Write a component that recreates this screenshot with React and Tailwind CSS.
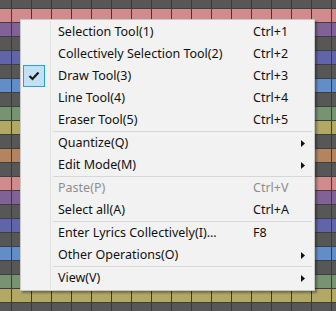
import React from "react";

const OCTAVE = [
    "bg-[#d08c8c]", "bg-[#806296]", "bg-[#575757]", "bg-[#6264aa]", "bg-[#575757]", "bg-[#628ec8]",
    "bg-[#575757]", "bg-[#769470]", "bg-[#b2a866]", "bg-[#575757]", "bg-[#b28460]", "bg-[#575757]",
];

const rowGrid =
    "bg-[linear-gradient(to_right,#3b3b3b_1px,transparent_1px)] bg-[length:20px_100%] bg-[position:11px_0]";

const MENU = [
    {label: "Selection Tool(1)", key: "Ctrl+1"},
    {label: "Collectively Selection Tool(2)", key: "Ctrl+2"},
    {label: "Draw Tool(3)", key: "Ctrl+3", checked: true},
    {label: "Line Tool(4)", key: "Ctrl+4"},
    {label: "Eraser Tool(5)", key: "Ctrl+5"},
    {sep: true},
    {label: "Quantize(Q)", sub: true},
    {label: "Edit Mode(M)", sub: true},
    {sep: true},
    {label: "Paste(P)", key: "Ctrl+V", disabled: true},
    {label: "Select all(A)", key: "Ctrl+A"},
    {sep: true},
    {label: "Enter Lyrics Collectively(I)...", key: "F8"},
    {label: "Other Operations(O)", sub: true},
    {sep: true},
    {label: "View(V)", sub: true},
];

const Check = () => (
    <svg width="12" height="10" viewBox="0 0 12 10">
        <path d="M1.5 5 L4.5 8 L10.5 1.5" fill="none" stroke="#1a1a1a" strokeWidth="2.2" />
    </svg>
);

const MenuRow = ({item}) => {
    if (item.sep) {
        return (
            <div className="flex h-[1px]">
                <div className="w-[30px] border-r border-[#e0e0e0]" />
                <div className="ml-[2px] mr-[2px] flex-1 bg-[#d7d7d7]" />
            </div>
        );
    }
    return (
        <div className={"flex h-[22px] items-center " + (item.disabled ? "text-[#8d8d8d]" : "text-[#111111]")}>
            <div className="flex h-full w-[30px] items-center border-r border-[#e0e0e0] pl-[2px]">
                {item.checked && (
                    <div className="flex h-[22px] w-[22px] items-center justify-center border border-[#26a0da] bg-[#c4e0f4]">
                        <Check />
                    </div>
                )}
            </div>
            <div className="w-[202px] whitespace-nowrap pl-[7px]">{item.label}</div>
            <div className="w-[48px] whitespace-nowrap">{item.key}</div>
            <div className="flex flex-1 items-center">
                {item.sub && (
                    <svg width="4" height="7" viewBox="0 0 4 7">
                        <polygon points="0,0 4,3.5 0,7" fill="#111111" />
                    </svg>
                )}
            </div>
        </div>
    );
};

export default function App() {
    const rows = [...OCTAVE, ...OCTAVE];
    return (
        <div className="relative h-[311px] w-[336px] overflow-hidden bg-[#575757]">
            <div className={"h-[8px] bg-[#575757] " + rowGrid} />
            {rows.map((c, i) => (
                <div key={i} className={"h-[14px] border-t border-[#3f3f3f] " + c + " " + rowGrid} />
            ))}

            <div className="absolute left-[20px] top-[19px] w-[295px] border border-[#c8c8c8] bg-[#f2f2f2] py-[1px] font-['Noto_Sans'] text-[12.5px] leading-none shadow-[2px_2px_2px_rgba(0,0,0,0.35)]">
                {MENU.map((item, i) => (
                    <MenuRow key={i} item={item} />
                ))}
            </div>
        </div>
    );
}
